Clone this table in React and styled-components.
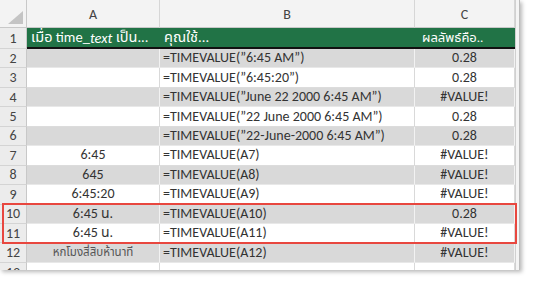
import React from "react";
import styled, { createGlobalStyle } from "styled-components";

const Global = createGlobalStyle`
  html, body { margin: 0; padding: 0; background: #fff; }
  body { font-family: Carlito, "Open Sans", "Noto Sans Thai", "Noto Sans", sans-serif; }
`;

const Page = styled.div`
  width: 535px;
  height: 284px;
  overflow: hidden;
  background: #fff;
`;

const Sheet = styled.div`
  position: relative;
  width: 519px;
  height: 270px;
  overflow: hidden;
  box-shadow: 2px 2px 4px rgba(0, 0, 0, 0.28);
  border-right: 1px solid #bcbcbc;
  background: #fff;
`;

const Grid = styled.div`
  display: grid;
  grid-template-columns: 27px 133px 255px 100px 4px;
  grid-template-rows: 28px 21px;
  grid-auto-rows: 19.45px;
  font-size: 14px;
  color: #333;
`;

const Corner = styled.div`
  background: #f3f3f3;
  border-right: 1px solid #c8c8c8;
  border-bottom: 1px solid #c8c8c8;
  display: flex;
  align-items: flex-end;
  justify-content: flex-end;
  padding: 0 3px 3px 0;
`;

const ColHead = styled.div`
  background: #f3f3f3;
  border-right: 1px solid #d6d6d6;
  border-bottom: 1px solid #c8c8c8;
  display: flex;
  align-items: flex-end;
  justify-content: center;
  padding-bottom: 4px;
  font-size: 14px;
  color: #444;
`;

const RowHead = styled.div`
  background: #ececec;
  border-right: 1px solid #c8c8c8;
  border-bottom: 1px solid #d4d4d4;
  display: flex;
  align-items: center;
  justify-content: center;
  font-size: 14px;
  color: #444;
`;

const Title = styled.div`
  background: #217346;
  color: #fff;
  border-bottom: 2px solid #111;
  display: flex;
  align-items: center;
  justify-content: flex-start;
  padding: 0 3px 0 ${(p) => (p.$pad ? p.$pad : "4px")};
  font-size: ${(p) => (p.$size ? p.$size : "14.5px")};
  white-space: nowrap;
  overflow: hidden;
`;

const Cell = styled.div`
  background: ${(p) => (p.$shade ? "#d9d9d9" : "#fff")};
  border-right: 1px solid ${(p) => (p.$shade ? "#f2f2f2" : "#d9d9d9")};
  border-bottom: 1px solid ${(p) => (p.$shade ? "#e8e8e8" : "#dcdcdc")};
  display: flex;
  align-items: center;
  justify-content: ${(p) => (p.$left ? "flex-start" : "center")};
  padding-left: ${(p) => (p.$left ? "3px" : "0")};
  white-space: nowrap;
  overflow: hidden;
  line-height: 1;
  font-size: ${(p) => (p.$small ? "11.5px" : "14px")};
  color: ${(p) => (p.$small ? "#555" : "#333")};
`;

const Edge = styled.div`
  background: #f4f4f4;
  border-left: 1px solid #d0d0d0;
`;

const Highlight = styled.div`
  position: absolute;
  box-sizing: border-box;
  left: 2px;
  top: 203px;
  width: 515px;
  height: 41px;
  border: 2px solid #e8473f;
  pointer-events: none;
`;

const rows = [
  ["", '=TIMEVALUE("6:45 AM")', "0.28"],
  ["", '=TIMEVALUE("6:45:20")', "0.28"],
  ["", '=TIMEVALUE("June 22 2000 6:45 AM")', "#VALUE!"],
  ["", '=TIMEVALUE("22 June 2000 6:45 AM")', "0.28"],
  ["", '=TIMEVALUE("22-June-2000 6:45 AM")', "0.28"],
  ["6:45", "=TIMEVALUE(A7)", "#VALUE!"],
  ["645", "=TIMEVALUE(A8)", "#VALUE!"],
  ["6:45:20", "=TIMEVALUE(A9)", "#VALUE!"],
  ["6:45 น.", "=TIMEVALUE(A10)", "0.28"],
  ["6:45 น.", "=TIMEVALUE(A11)", "#VALUE!"],
  ["หกโมงสี่สิบห้านาที", "=TIMEVALUE(A12)", "#VALUE!"],
  ["", "", ""],
];

const fixQuotes = (s) => s.replace(/"/g, "\u201D");

export default function App() {
  return (
    <Page>
      <Global />
      <Sheet>
        <Grid>
          <Corner>
            <svg width="15" height="13" viewBox="0 0 15 13">
              <polygon points="15,0 15,13 0,13" fill="#c4c4c4" />
            </svg>
          </Corner>
          <ColHead>A</ColHead>
          <ColHead>B</ColHead>
          <ColHead>C</ColHead>
          <Edge />

          <RowHead>1</RowHead>
          <Title>
            เมื่อ time_<i>text</i>&nbsp;เป็น...
          </Title>
          <Title>คุณใช้...</Title>
          <Title $pad="7px" $size="13px">ผลลัพธ์คือ..</Title>
          <Edge />

          {rows.map((r, i) => {
            const n = i + 2;
            const shade = n % 2 === 0;
            return (
              <React.Fragment key={n}>
                <RowHead>{n}</RowHead>
                <Cell $shade={shade} $small={n === 12}>
                  {r[0]}
                </Cell>
                <Cell $shade={shade} $left>
                  {fixQuotes(r[1])}
                </Cell>
                <Cell $shade={shade}>{r[2]}</Cell>
                <Edge />
              </React.Fragment>
            );
          })}
        </Grid>
        <Highlight />
      </Sheet>
    </Page>
  );
}
